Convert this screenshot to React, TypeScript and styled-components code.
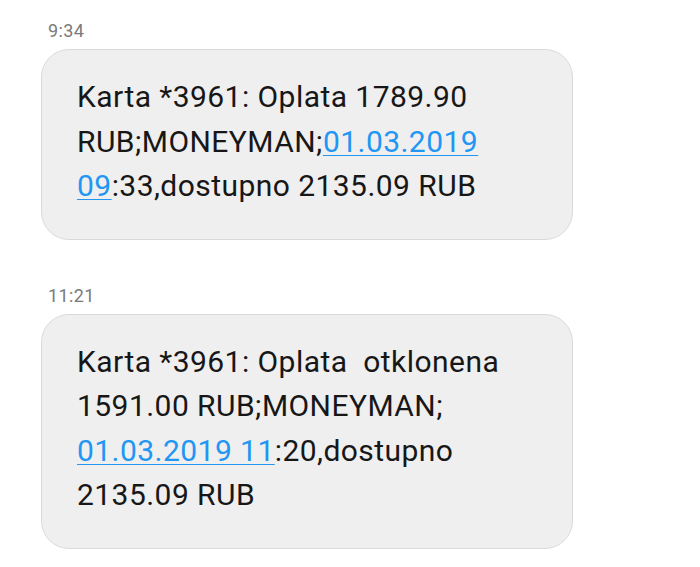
import React from "react";
import styled, { createGlobalStyle } from "styled-components";

const GlobalStyle = createGlobalStyle`
    body {
        margin: 0;
        background: #ffffff;
        font-family: Roboto, "Noto Sans", sans-serif;
    }
`;

const Thread = styled.div`
    display: flex;
    flex-direction: column;
    gap: 46px;
    padding: 21px 0 0 41px;
`;

const Message = styled.div`
    display: flex;
    flex-direction: column;
    gap: 8px;
`;

const Time = styled.div`
    padding-left: 7px;
    font-size: 18px;
    line-height: 20px;
    letter-spacing: 0.4px;
    color: #7a7a7a;
`;

const Bubble = styled.div`
    width: 532px;
    box-sizing: border-box;
    padding: 25px 20px 30px 35px;
    background: #efefef;
    border: 1px solid #dadada;
    border-radius: 28px;
    font-size: 30px;
    line-height: 44.5px;
    letter-spacing: 0.45px;
    color: #171717;
`;

const Link = styled.span`
    color: #2196f3;
    text-decoration: underline;
    text-decoration-thickness: 1px;
    text-underline-offset: 3px;
`;

type Part = string | { link: string };

const messages: { time: string; lines: Part[][] }[] = [
    {
        time: "9:34",
        lines: [
            ["Karta *3961: Oplata 1789.90"],
            ["RUB;MONEYMAN;", { link: "01.03.2019" }],
            [{ link: "09" }, ":33,dostupno 2135.09 RUB"],
        ],
    },
    {
        time: "11:21",
        lines: [
            ["Karta *3961: Oplata\u00a0 otklonena"],
            ["1591.00 RUB;MONEYMAN;"],
            [{ link: "01.03.2019 11" }, ":20,dostupno"],
            ["2135.09 RUB"],
        ],
    },
];

function App() {
    return (
        <>
            <GlobalStyle />
            <Thread>
                {messages.map((msg) => (
                    <Message key={msg.time}>
                        <Time>{msg.time}</Time>
                        <Bubble>
                            {msg.lines.map((line, i) => (
                                <div key={i}>
                                    {line.map((part, j) =>
                                        typeof part === "string" ? part : <Link key={j}>{part.link}</Link>
                                    )}
                                </div>
                            ))}
                        </Bubble>
                    </Message>
                ))}
            </Thread>
        </>
    );
}

export default App;
